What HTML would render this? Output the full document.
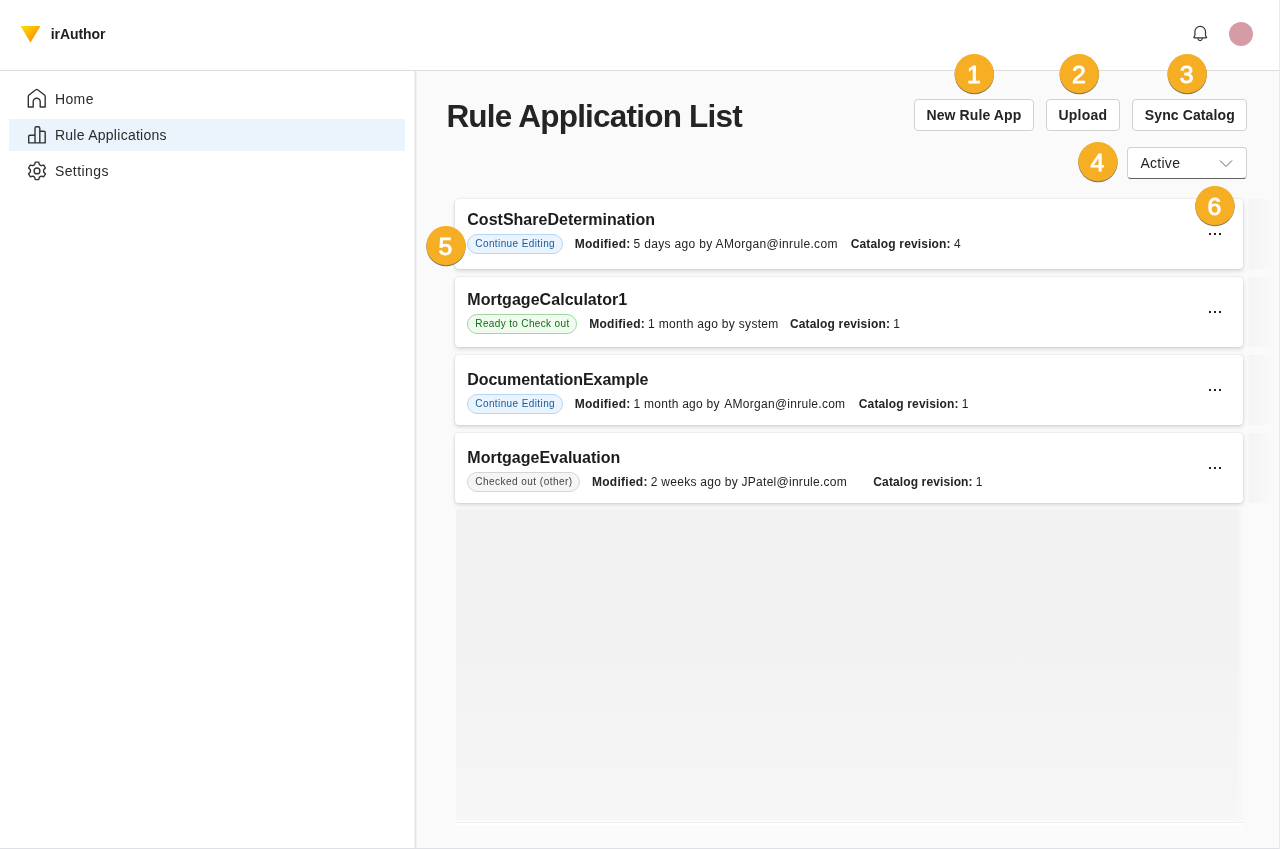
<!DOCTYPE html>
<html lang="en">
<head>
<meta charset="utf-8">
<title>irAuthor - Rule Application List</title>
<style>
*{box-sizing:border-box;margin:0;padding:0}
html,body{width:1280px;height:849px;overflow:hidden;background:#fff;font-family:"Liberation Sans",sans-serif;color:#222}
.abs{position:absolute}
.t{position:absolute;white-space:pre}
#root{position:absolute;left:0;top:0;width:1280px;height:849px;will-change:transform}
#header{position:absolute;left:0;top:0;width:1280px;height:71px;background:#fff;border-bottom:1px solid #dcdcdc}
#sidebar{position:absolute;left:0;top:71px;width:417px;height:778px;background:linear-gradient(to right,#fff 0,#fff 414px,#f3f3f3 414px,#f3f3f3 415px,#e3e3e3 415px,#e3e3e3 416px,#f1f1f1 416px,#f1f1f1 417px)}
#main{position:absolute;left:417px;top:71px;width:863px;height:778px;background:#fafafa}
.navsel{position:absolute;left:9px;top:119px;width:396px;height:32px;background:#ebf3fc}
.btn{position:absolute;top:99px;height:32px;background:#fff;border:1px solid #d1d1d1;border-radius:4px}
.select{position:absolute;left:1127px;top:147px;width:120px;height:32px;background:#fff;border:1px solid #d1d1d1;border-bottom-color:#616161;border-radius:4px}
.badge{position:absolute;width:40px;height:40px;color:#fff;font-size:24.8px;line-height:40px;text-align:center;-webkit-text-stroke:.9px #fff}
.card{position:absolute;left:455px;width:788px;height:70px;background:#fff;border-radius:4px;box-shadow:0 0 2px rgba(0,0,0,.12),0 2px 4px rgba(0,0,0,.14)}
.pill{position:absolute;left:467px;height:20px;border-radius:10px;border:1px solid}
.pill.blue{background:#ebf3fc;border-color:#b4d6fa}
.pill.green{background:#f1faf1;border-color:#9fd89f}
.pill.grey{background:#f5f5f5;border-color:#d6d6d6}
.strip{position:absolute;left:1246px;width:28px;height:70px;background:linear-gradient(to right,#fafafa 0,#f4f4f4 5px,#fafafa 28px)}
.dots{position:absolute;left:1209px;width:12px;height:2px}
.dots i{position:absolute;top:0;width:2px;height:2px;background:#222}
</style>
</head>
<body>
<div id="root">
<div id="header">
  <svg class="abs" style="left:20px;top:26px" width="21" height="17" viewBox="0 0 21 17"><defs><linearGradient id="g" x1="0" y1="0" x2="1" y2="1"><stop offset="0" stop-color="#ffe100"/><stop offset=".7" stop-color="#fb9a00"/></linearGradient></defs><path d="M.5 0H20.5L10.5 16.5Z" fill="url(#g)"/></svg>
  <svg class="abs" style="left:0;top:0;overflow:visible" width="1280" height="70" viewBox="0 0 1280 70" fill="none" stroke="#333" stroke-width="1.200" stroke-linejoin="round" stroke-linecap="round"><path d="M1194.900 35.500V31.600A5.300 5.300 0 0 1 1205.500 31.600V35.500L1206.500 37.200Q1206.800 37.900 1206 37.900H1194.400Q1193.600 37.900 1193.900 37.200Z"/><path d="M1197.900 38.600A2.300 2.800 0 0 0 1202.300 38.600"/></svg>
  <div class="abs" style="left:1229px;top:22px;width:24px;height:24px;border-radius:50%;background:#d69ca5"></div>
</div>
<div id="sidebar"></div>
<div class="navsel"></div>
<!--ICONS--><svg class="abs" style="left:0;top:0;overflow:visible" width="420" height="200" viewBox="0 0 420 200" fill="none" stroke="#333" stroke-width="1.400" stroke-linejoin="round" stroke-linecap="round">
<path d="M28.300 107V96.400Q28.300 95.600 29 95L35.900 89.700Q36.750 89.100 37.600 89.700L44.500 95Q45.200 95.600 45.200 96.400V107H40.200V101.800A3.500 3.500 0 0 0 33.200 101.800V107Z"/>
<path d="M28.700 142.900V136.300Q28.700 135.300 29.700 135.300H35M35 142.900V128.300Q35 126.800 36.500 126.800H38.300Q39.800 126.800 39.800 128.300V142.900M39.800 131.300H43.900Q45.200 131.300 45.200 132.600V142.900M28.700 142.900H45.200"/>
<path d="M38.70 162.16 L35.30 162.16 L34.60 164.65 L32.78 165.69 L30.28 165.06 L28.58 168.00 L30.38 169.85 L30.38 171.95 L28.58 173.80 L30.28 176.74 L32.78 176.11 L34.60 177.15 L35.30 179.64 L38.70 179.64 L39.40 177.15 L41.22 176.11 L43.72 176.74 L45.42 173.80 L43.62 171.95 L43.62 169.85 L45.42 168.00 L43.72 165.06 L41.22 165.69 L39.40 164.65Z" stroke-width="1.400"/>
<circle cx="37.0" cy="170.9" r="2.900"/>
</svg><!--/ICONS-->
<div id="main"></div>
<div class="abs" style="left:456px;top:509px;width:788px;height:311px;background:linear-gradient(to right,rgba(250,250,250,0) 0,rgba(250,250,250,0) 780px,#fafafa 788px),linear-gradient(to bottom,#f2f2f2 0,#f2f2f2 45%,#f6f6f6 100%)"></div>
<div class="abs" style="left:456px;top:822px;width:787px;height:1px;background:#f0f0f0"></div>
<div class="abs" style="left:456px;top:823px;width:787px;height:2px;background:#fff"></div>
<div class="abs" style="left:456px;top:825px;width:787px;height:23px;background:#fbfbfb"></div>
<div class="strip" style="top:199px"></div>
<div class="strip" style="top:277px"></div>
<div class="strip" style="top:355px"></div>
<div class="strip" style="top:433px"></div>
<div class="abs" style="left:0;top:848px;width:1280px;height:1px;background:#dfdfe8"></div>
<div class="abs" style="left:1279px;top:0;width:1px;height:849px;background:#eceae6"></div>
<div class="btn" style="left:914px;width:120px"></div>
<div class="btn" style="left:1046px;width:74px"></div>
<div class="btn" style="left:1132px;width:115px"></div>
<div class="select"><svg class="abs" style="left:91px;top:11px" width="14" height="9" viewBox="0 0 14 9" fill="none" stroke="#616161" stroke-width="1"><path d="M1 1.500l6 6 6-6"/></svg></div>

<div class="card" style="top:199px"></div>
<div class="card" style="top:277px"></div>
<div class="card" style="top:355px"></div>
<div class="card" style="top:433px"></div>
<div class="pill blue" style="top:234px;width:96px"></div>
<div class="pill green" style="top:314px;width:110px"></div>
<div class="pill blue" style="top:394px;width:96px"></div>
<div class="pill grey" style="top:472px;width:113px"></div>
<div class="dots" style="top:233px"><i style="left:0"></i><i style="left:5px"></i><i style="left:10px"></i></div>
<div class="dots" style="top:311px"><i style="left:0"></i><i style="left:5px"></i><i style="left:10px"></i></div>
<div class="dots" style="top:389px"><i style="left:0"></i><i style="left:5px"></i><i style="left:10px"></i></div>
<div class="dots" style="top:467px"><i style="left:0"></i><i style="left:5px"></i><i style="left:10px"></i></div>
<div class="t" style="left:50.8px;top:25.0px;font-size:14px;line-height:18px;font-weight:bold;color:#1f1f1f;letter-spacing:-0.07px">irAuthor</div>
<div class="t" style="left:54.9px;top:89.8px;font-size:14px;line-height:18px;color:#2b2b2b;letter-spacing:0.41px">Home</div>
<div class="t" style="left:54.9px;top:125.7px;font-size:14px;line-height:18px;color:#2b2b2b;letter-spacing:0.27px">Rule Applications</div>
<div class="t" style="left:54.9px;top:161.7px;font-size:14px;line-height:18px;color:#2b2b2b;letter-spacing:0.42px">Settings</div>
<div class="t" style="left:446.4px;top:95.9px;font-size:31.5px;line-height:41px;font-weight:bold;color:#242424;letter-spacing:-0.79px">Rule Application List</div>
<div class="t" style="left:926.5px;top:106.2px;font-size:14px;line-height:18px;font-weight:bold;color:#242424;letter-spacing:0.11px">New Rule App</div>
<div class="t" style="left:1058.5px;top:106.2px;font-size:14px;line-height:18px;font-weight:bold;color:#242424;letter-spacing:0.22px">Upload</div>
<div class="t" style="left:1144.8px;top:106.2px;font-size:14px;line-height:18px;font-weight:bold;color:#242424;letter-spacing:0.11px">Sync Catalog</div>
<div class="t" style="left:1140.4px;top:153.8px;font-size:14px;line-height:18px;color:#242424;letter-spacing:0.28px">Active</div>
<div class="t" style="left:467.3px;top:208.9px;font-size:16px;line-height:21px;font-weight:bold;color:#1c1c1c;letter-spacing:0.01px">CostShareDetermination</div>
<div class="t" style="left:475.3px;top:237.4px;font-size:10px;line-height:13px;color:#115ea3;letter-spacing:0.40px">Continue Editing</div>
<div class="t" style="left:574.7px;top:235.8px;font-size:12px;line-height:16px;font-weight:bold;color:#242424;letter-spacing:0.28px">Modified:</div>
<div class="t" style="left:633.6px;top:235.8px;font-size:12px;line-height:16px;color:#242424;letter-spacing:0.33px">5 days ago by AMorgan@inrule.com</div>
<div class="t" style="left:850.7px;top:235.8px;font-size:12px;line-height:16px;font-weight:bold;color:#242424;letter-spacing:0.16px">Catalog revision:</div>
<div class="t" style="left:954.0px;top:235.8px;font-size:12px;line-height:16px;color:#242424;letter-spacing:0.00px">4</div>
<div class="t" style="left:467.3px;top:289.0px;font-size:16px;line-height:21px;font-weight:bold;color:#1c1c1c;letter-spacing:0.04px">MortgageCalculator1</div>
<div class="t" style="left:475.3px;top:317.4px;font-size:10px;line-height:13px;color:#0e700e;letter-spacing:0.36px">Ready to Check out</div>
<div class="t" style="left:589.2px;top:315.8px;font-size:12px;line-height:16px;font-weight:bold;color:#242424;letter-spacing:0.28px">Modified:</div>
<div class="t" style="left:648.1px;top:315.8px;font-size:12px;line-height:16px;color:#242424;letter-spacing:0.31px">1 month ago by system</div>
<div class="t" style="left:789.9px;top:315.8px;font-size:12px;line-height:16px;font-weight:bold;color:#242424;letter-spacing:0.17px">Catalog revision:</div>
<div class="t" style="left:893.3px;top:315.8px;font-size:12px;line-height:16px;color:#242424;letter-spacing:0.00px">1</div>
<div class="t" style="left:467.3px;top:368.8px;font-size:16px;line-height:21px;font-weight:bold;color:#1c1c1c;letter-spacing:-0.06px">DocumentationExample</div>
<div class="t" style="left:475.3px;top:397.4px;font-size:10px;line-height:13px;color:#115ea3;letter-spacing:0.40px">Continue Editing</div>
<div class="t" style="left:574.7px;top:395.8px;font-size:12px;line-height:16px;font-weight:bold;color:#242424;letter-spacing:0.28px">Modified:</div>
<div class="t" style="left:633.6px;top:395.8px;font-size:12px;line-height:16px;color:#242424;letter-spacing:0.24px">1 month ago by</div>
<div class="t" style="left:724.3px;top:395.8px;font-size:12px;line-height:16px;color:#242424;letter-spacing:0.27px">AMorgan@inrule.com</div>
<div class="t" style="left:858.8px;top:395.8px;font-size:12px;line-height:16px;font-weight:bold;color:#242424;letter-spacing:0.14px">Catalog revision:</div>
<div class="t" style="left:961.7px;top:395.8px;font-size:12px;line-height:16px;color:#242424;letter-spacing:0.00px">1</div>
<div class="t" style="left:467.3px;top:447.0px;font-size:16px;line-height:21px;font-weight:bold;color:#1c1c1c;letter-spacing:0.01px">MortgageEvaluation</div>
<div class="t" style="left:475.3px;top:475.4px;font-size:10px;line-height:13px;color:#424242;letter-spacing:0.47px">Checked out (other)</div>
<div class="t" style="left:591.9px;top:473.8px;font-size:12px;line-height:16px;font-weight:bold;color:#242424;letter-spacing:0.28px">Modified:</div>
<div class="t" style="left:650.8px;top:473.8px;font-size:12px;line-height:16px;color:#242424;letter-spacing:0.27px">2 weeks ago by JPatel@inrule.com</div>
<div class="t" style="left:873.3px;top:473.8px;font-size:12px;line-height:16px;font-weight:bold;color:#242424;letter-spacing:0.12px">Catalog revision:</div>
<div class="t" style="left:975.7px;top:473.8px;font-size:12px;line-height:16px;color:#242424;letter-spacing:0.00px">1</div>
<svg class="abs" style="left:0;top:0" width="1280" height="300" viewBox="0 0 1280 300"><circle cx="974.3" cy="74.60000000000001" r="19.700" fill="#5a4a1e" opacity=".75"/><circle cx="974.3" cy="73.7" r="19.600" fill="#f6ae24"/><circle cx="1079.3" cy="74.60000000000001" r="19.700" fill="#5a4a1e" opacity=".75"/><circle cx="1079.3" cy="73.7" r="19.600" fill="#f6ae24"/><circle cx="1187.2" cy="74.60000000000001" r="19.700" fill="#5a4a1e" opacity=".75"/><circle cx="1187.2" cy="73.7" r="19.600" fill="#f6ae24"/><circle cx="1097.95" cy="162.5" r="19.700" fill="#5a4a1e" opacity=".75"/><circle cx="1097.95" cy="161.6" r="19.600" fill="#f6ae24"/><circle cx="446.0" cy="246.6" r="19.700" fill="#5a4a1e" opacity=".75"/><circle cx="446.0" cy="245.7" r="19.600" fill="#f6ae24"/><circle cx="1214.95" cy="206.55" r="19.700" fill="#5a4a1e" opacity=".75"/><circle cx="1214.95" cy="205.65" r="19.600" fill="#f6ae24"/></svg>
<div class="badge" style="left:953.80px;top:54.90px">1</div>
<div class="badge" style="left:1058.80px;top:54.90px">2</div>
<div class="badge" style="left:1166.70px;top:54.90px">3</div>
<div class="badge" style="left:1077.45px;top:142.80px">4</div>
<div class="badge" style="left:425.50px;top:226.90px">5</div>
<div class="badge" style="left:1194.45px;top:186.85px">6</div>
</div>
</body>
</html>
